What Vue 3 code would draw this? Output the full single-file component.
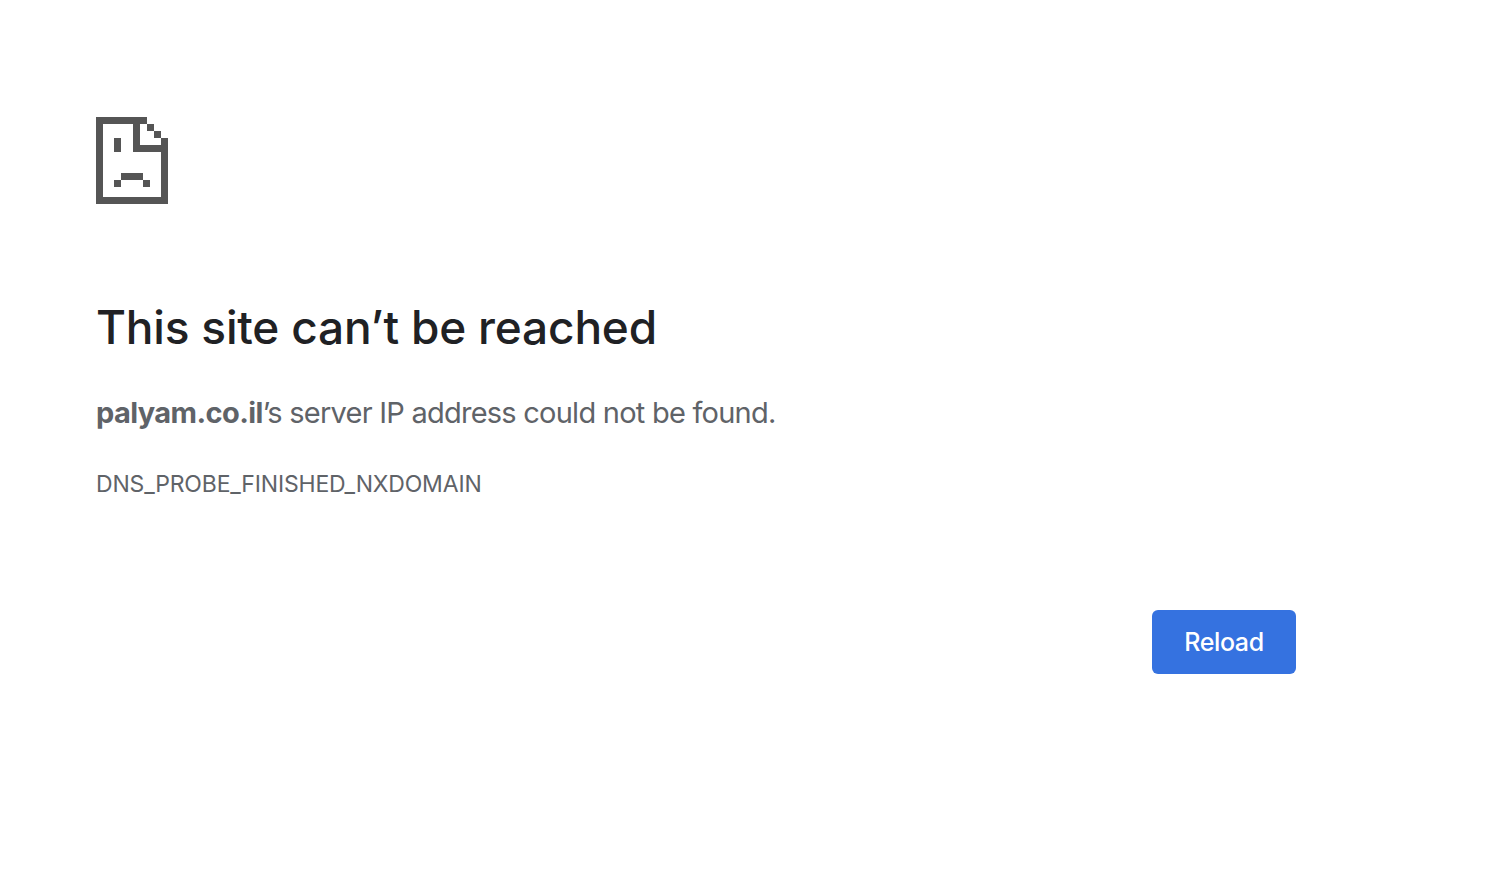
<template>
  <main class="error-page">
    <svg class="sad-file" xmlns="http://www.w3.org/2000/svg" width="72" height="87" viewBox="0 0 72 87" shape-rendering="crispEdges">
      <path d="M0 0H51V7H7V80H65V35H37V7H44V28H65V21H72V87H0Z M51 7H58V14H51Z M58 14H65V21H58Z M18 21H25V35H18Z M25 56H47V63H25Z M18 63H25V70H18Z M47 63H54V70H47Z"/>
    </svg>

    <h1 class="title">This site can’t be reached</h1>
    <p class="message"><strong>{{ host }}</strong>’s server IP address could not be found.</p>
    <div class="error-code">{{ code }}</div>

    <div class="actions">
      <button class="reload" type="button">Reload</button>
    </div>
  </main>
</template>

<script setup>
const host = 'palyam.co.il'
const code = 'DNS_PROBE_FINISHED_NXDOMAIN'
</script>

<style>
html, body {
  background: #fff;
}
</style>

<style scoped>
.error-page {
  box-sizing: border-box;
  width: 1296px;
  height: 882px;
  padding: 117px 0 0 96px;
  font-family: Inter, "Liberation Sans", sans-serif;
  color: #5f6368;
}

.sad-file {
  display: block;
  fill: #555;
}

.title {
  margin: 93px 0 0;
  font-size: 46px;
  font-weight: 500;
  line-height: 60px;
  letter-spacing: -0.2px;
  color: #202124;
}

.message {
  margin: 36px 0 0;
  font-size: 29px;
  line-height: 40px;
  letter-spacing: -0.76px;
}

.message strong {
  font-weight: 700;
  letter-spacing: -0.6px;
}

.error-code {
  margin-top: 36px;
  font-size: 23px;
  line-height: 30px;
  letter-spacing: -0.18px;
}

.actions {
  display: flex;
  justify-content: flex-end;
  margin-top: 111px;
}

.reload {
  width: 144px;
  height: 64px;
  border: 0;
  border-radius: 6px;
  background: #3572e0;
  color: #fff;
  font-family: inherit;
  font-size: 25px;
  font-weight: 500;
  letter-spacing: -0.4px;
}
</style>
